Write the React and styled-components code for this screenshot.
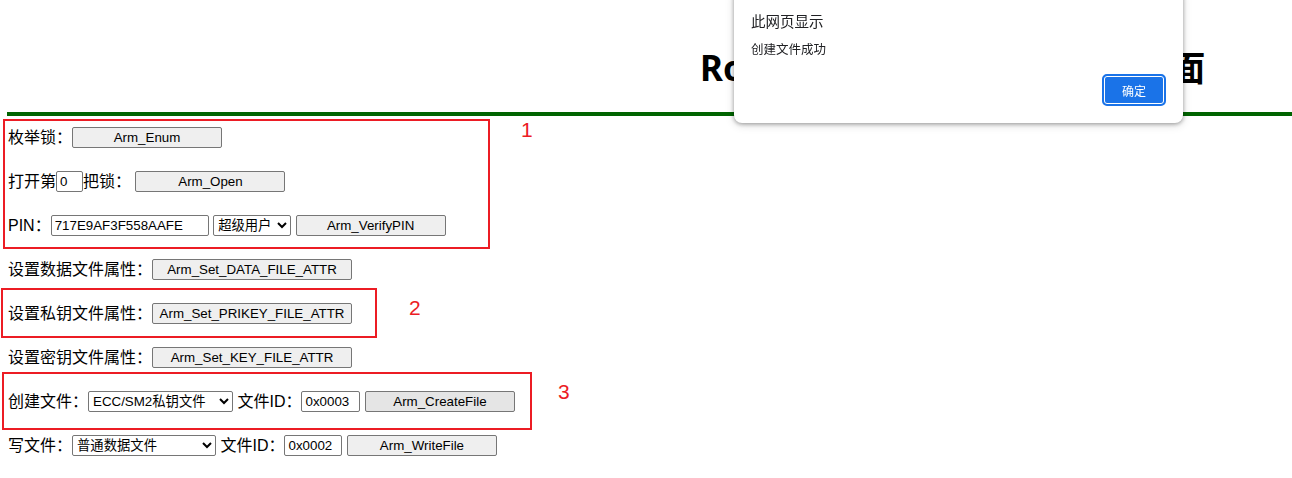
import React from "react";
import styled, { createGlobalStyle } from "styled-components";

const GlobalStyle = createGlobalStyle`
  html, body {
    margin: 0;
    padding: 0;
    background: #fff;
    overflow: hidden;
  }
  body {
    padding: 8px 0 0 8px;
    font-family: "Liberation Sans", "Noto Sans CJK SC", sans-serif;
    color: #000;
  }
`;

const Page = styled.div`
  position: relative;
  width: 1284px;
  height: 470px;
`;

const Header = styled.div`
  height: 104px;
  box-sizing: border-box;
  padding-top: 40px;
`;

const Title = styled.h1`
  margin: 0 0 0 692px;
  font-family: "Noto Sans", "Noto Sans CJK SC", sans-serif;
  font-size: 35px;
  font-weight: 700;
  line-height: 40px;
  white-space: nowrap;
`;

const GreenRule = styled.div`
  height: 4px;
  margin-left: -1px;
  background: #006400;
`;

const Rows = styled.div`
  margin-top: -1px;
`;

const Row = styled.div`
  height: 44px;
  line-height: 44px;
  font-size: 16px;
  white-space: nowrap;
`;

const Label = styled.span`
  vertical-align: middle;
`;

const Button = styled.button`
  box-sizing: border-box;
  width: ${(p) => p.$w || 150}px;
  height: 21px;
  margin: 0;
  padding: 0 6px;
  vertical-align: middle;
  font-family: "Liberation Sans", "Noto Sans CJK SC", sans-serif;
  font-size: 13.333px;
  line-height: 19px;
  color: #000;
  background: ${(p) => (p.$hover ? "#e5e5e5" : "#efefef")};
  border: 1px solid #767676;
  border-radius: 2px;
`;

const TextInput = styled.input`
  box-sizing: border-box;
  width: ${(p) => p.$w}px;
  height: 21px;
  margin: 0;
  padding: 1px 3px;
  vertical-align: middle;
  font-family: "Liberation Sans", "Noto Sans CJK SC", sans-serif;
  font-size: 13.333px;
  color: #000;
  background: #fff;
  border: 1px solid #767676;
  border-radius: 2px;
  outline: none;
`;

const Select = styled.select`
  box-sizing: border-box;
  width: ${(p) => p.$w}px;
  height: 21px;
  margin: 0;
  vertical-align: middle;
  font-family: "Liberation Sans", "Noto Sans CJK SC", sans-serif;
  font-size: 13.333px;
  color: #000;
  background: #fff;
  border: 1px solid #767676;
  border-radius: 2px;
`;

const Mark = styled.div`
  position: absolute;
  left: ${(p) => p.$x}px;
  top: ${(p) => p.$y}px;
  width: ${(p) => p.$w}px;
  height: ${(p) => p.$h}px;
  box-sizing: border-box;
  border: 2px solid #ec1c24;
  pointer-events: none;
`;

const MarkNumber = styled.span`
  position: absolute;
  left: ${(p) => p.$x}px;
  top: ${(p) => p.$y}px;
  font-family: "Liberation Sans", sans-serif;
  font-size: 21px;
  line-height: 24px;
  color: #ec1c24;
`;

const Dialog = styled.div`
  position: fixed;
  top: -8px;
  left: 734px;
  width: 449px;
  height: 131px;
  box-sizing: border-box;
  padding: 19px 17px 0 17px;
  background: #fff;
  border-radius: 0 0 8px 8px;
  box-shadow: 0 1px 4px rgba(0, 0, 0, 0.35), 0 2px 10px rgba(0, 0, 0, 0.15);
  display: flex;
  flex-direction: column;
  font-family: "Noto Sans CJK SC", sans-serif;
  color: #202124;
`;

const DialogTitle = styled.div`
  font-size: 14.5px;
  line-height: 20px;
`;

const DialogMessage = styled.div`
  margin-top: 9px;
  font-size: 12.5px;
  line-height: 18px;
`;

const DialogActions = styled.div`
  display: flex;
  justify-content: flex-end;
  margin-top: 16px;
`;

const OkButton = styled.button`
  box-sizing: border-box;
  width: 64px;
  height: 32px;
  font-family: "Noto Sans CJK SC", sans-serif;
  font-size: 12px;
  color: #fff;
  background: #1a73e8;
  border: 2px solid #1a73e8;
  border-radius: 5px;
  box-shadow: inset 0 0 0 1px #fff;
`;

export default function App() {
  return (
    <>
      <GlobalStyle />
      <Page>
        <Header>
          <Title>Rockey-ARM 接口功能测试页面</Title>
        </Header>
        <GreenRule />
        <Rows>
          <Row>
            <Label>枚举锁：</Label>
            <Button>Arm_Enum</Button>
          </Row>
          <Row>
            <Label>打开第</Label>
            <TextInput $w={27} defaultValue="0" />
            <Label>把锁：</Label> <Button>Arm_Open</Button>
          </Row>
          <Row>
            <Label>PIN：</Label>
            <TextInput $w={158} defaultValue="717E9AF3F558AAFE" />{" "}
            <Select $w={78} defaultValue="admin">
              <option value="admin">超级用户</option>
              <option value="user">普通用户</option>
            </Select>{" "}
            <Button>Arm_VerifyPIN</Button>
          </Row>
          <Row>
            <Label>设置数据文件属性：</Label>
            <Button $w={200}>Arm_Set_DATA_FILE_ATTR</Button>
          </Row>
          <Row>
            <Label>设置私钥文件属性：</Label>
            <Button $w={200}>Arm_Set_PRIKEY_FILE_ATTR</Button>
          </Row>
          <Row>
            <Label>设置密钥文件属性：</Label>
            <Button $w={200}>Arm_Set_KEY_FILE_ATTR</Button>
          </Row>
          <Row>
            <Label>创建文件：</Label>
            <Select $w={145} defaultValue="prikey">
              <option value="data">普通数据文件</option>
              <option value="prikey">ECC/SM2私钥文件</option>
            </Select>{" "}
            <Label>文件ID：</Label>
            <TextInput $w={59} defaultValue="0x0003" />{" "}
            <Button $hover>Arm_CreateFile</Button>
          </Row>
          <Row>
            <Label>写文件：</Label>
            <Select $w={144} defaultValue="data">
              <option value="data">普通数据文件</option>
              <option value="prikey">ECC/SM2私钥文件</option>
            </Select>{" "}
            <Label>文件ID：</Label>
            <TextInput $w={58} defaultValue="0x0002" />{" "}
            <Button>Arm_WriteFile</Button>
          </Row>
        </Rows>

        <Mark $x={-5} $y={111} $w={487} $h={130} />
        <MarkNumber $x={513} $y={110}>1</MarkNumber>
        <Mark $x={-7} $y={280} $w={376} $h={50} />
        <MarkNumber $x={401} $y={288}>2</MarkNumber>
        <Mark $x={-6} $y={364} $w={530} $h={58} />
        <MarkNumber $x={550} $y={372}>3</MarkNumber>
      </Page>

      <Dialog>
        <DialogTitle>此网页显示</DialogTitle>
        <DialogMessage>创建文件成功</DialogMessage>
        <DialogActions>
          <OkButton>确定</OkButton>
        </DialogActions>
      </Dialog>
    </>
  );
}
